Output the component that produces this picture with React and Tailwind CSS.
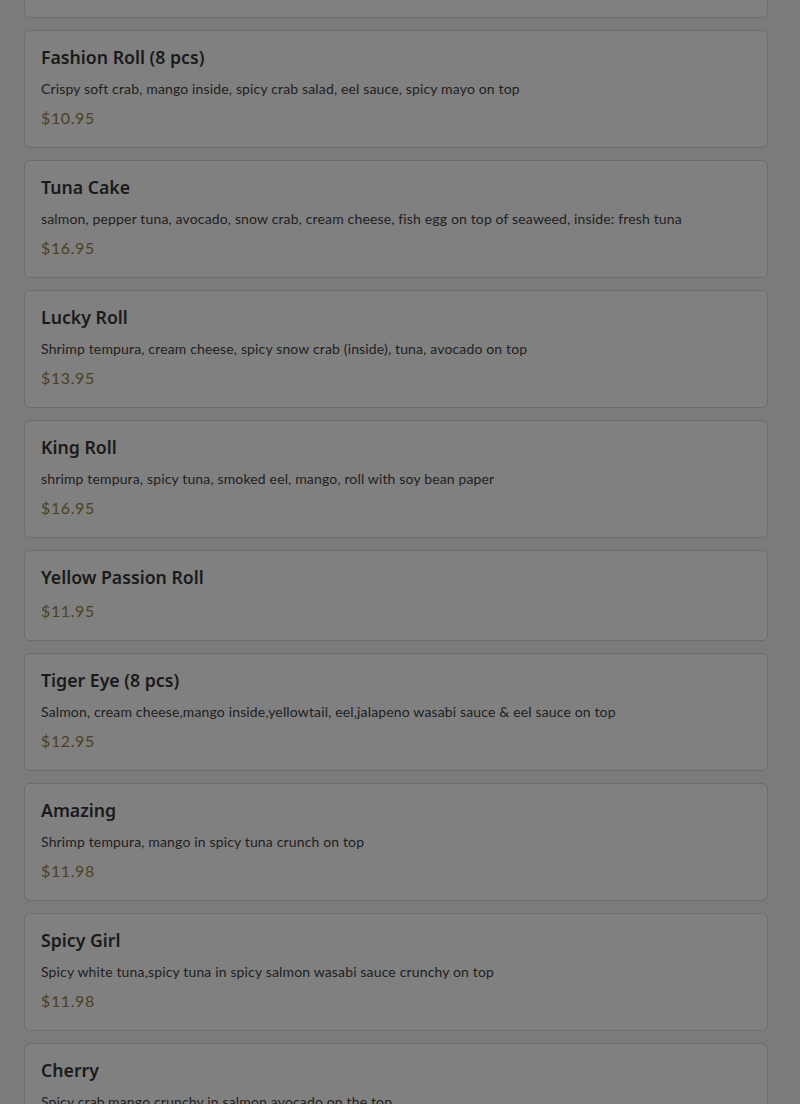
import React from "react";

const items = [
  { name: "Dragon Roll", desc: "Shrimp tempura, cucumber inside, eel and avocado on top", price: "$12.95" },
  { name: "Fashion Roll (8 pcs)", desc: "Crispy soft crab, mango inside, spicy crab salad, eel sauce, spicy mayo on top", price: "$10.95" },
  { name: "Tuna Cake", desc: "salmon, pepper tuna, avocado, snow crab, cream cheese, fish egg on top of seaweed, inside: fresh tuna", price: "$16.95" },
  { name: "Lucky Roll", desc: "Shrimp tempura, cream cheese, spicy snow crab (inside), tuna, avocado on top", price: "$13.95" },
  { name: "King Roll", desc: "shrimp tempura, spicy tuna, smoked eel, mango, roll with soy bean paper", price: "$16.95" },
  { name: "Yellow Passion Roll", desc: "", price: "$11.95" },
  { name: "Tiger Eye (8 pcs)", desc: "Salmon, cream cheese,mango inside,yellowtail, eel,jalapeno wasabi sauce & eel sauce on top", price: "$12.95" },
  { name: "Amazing", desc: "Shrimp tempura, mango in spicy tuna crunch on top", price: "$11.98" },
  { name: "Spicy Girl", desc: "Spicy white tuna,spicy tuna in spicy salmon wasabi sauce crunchy on top", price: "$11.98" },
  { name: "Cherry", desc: "Spicy crab,mango crunchy in salmon avocado on the top", price: "$11.98" },
];

export default function App() {
  return (
    <div className="w-[800px] h-[1104px] overflow-hidden bg-[#7b7b7b]" style={{ fontFamily: 'Lato, sans-serif' }}>
      <div className="mt-[-100px] pl-6 pr-8 flex flex-col gap-3">
        {items.map((it, i) => (
          <div key={i} className="bg-[#808080] border border-[#6c6c6c] rounded-md px-4 pt-[15px] pb-[17px]">
            <div
              className="text-[17.7px] leading-[22px] font-semibold text-[#1a1a1a] mb-[9px]"
              style={{ fontFamily: '"Noto Sans", sans-serif' }}
            >
              {it.name}
            </div>
            {it.desc ? (
              <div className="text-[14px] leading-[24px] tracking-[0.15px] text-[#202020] mb-[5px]">{it.desc}</div>
            ) : (
              <div className="h-[2px]" />
            )}
            <div className="text-[16px] leading-[24px] tracking-[0.6px] text-[#4f4020]">{it.price}</div>
          </div>
        ))}
      </div>
    </div>
  );
}
